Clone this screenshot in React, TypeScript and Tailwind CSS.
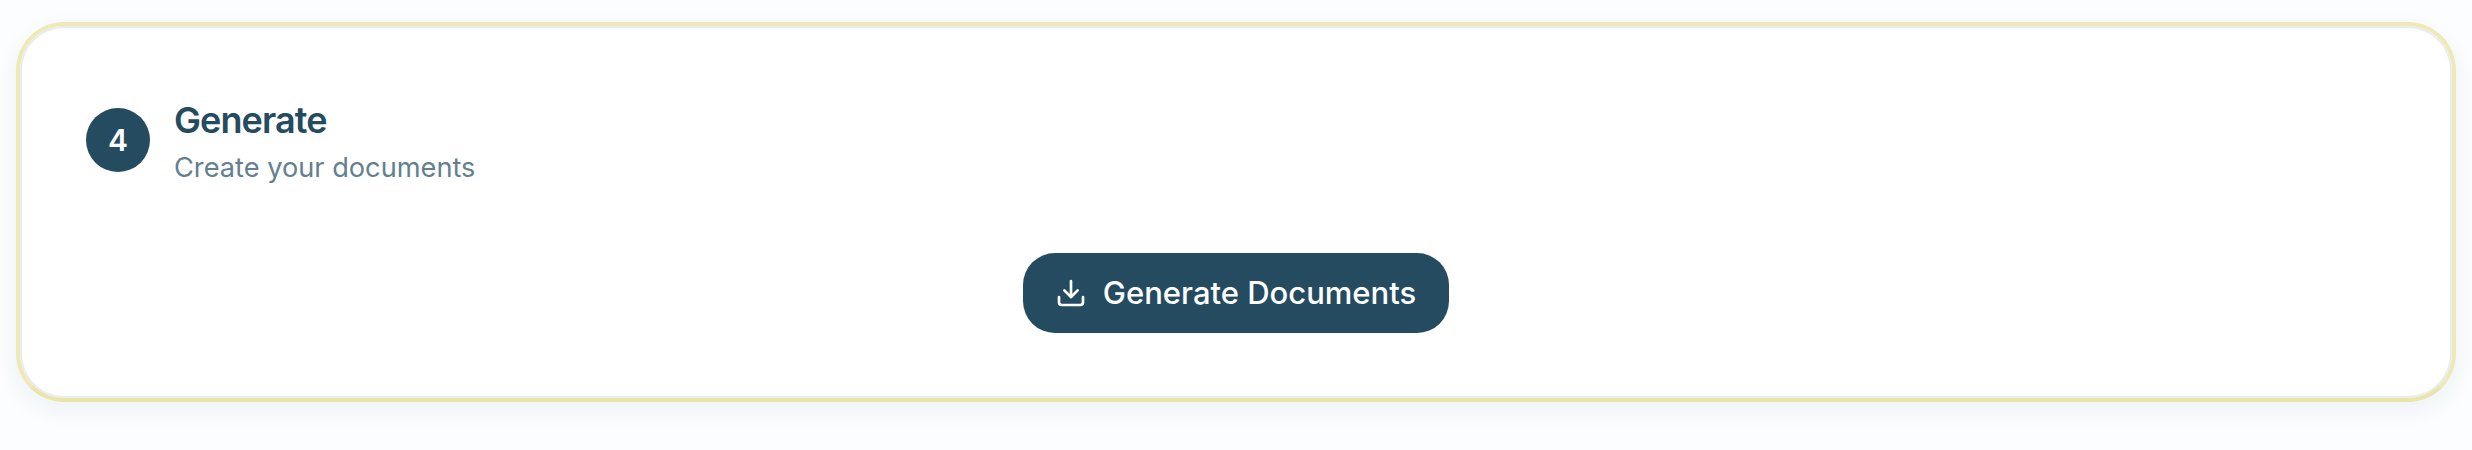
import { Download } from 'lucide-react';

function App() {
    return (
        <div className="w-full h-[450px] overflow-hidden bg-[#fbfdfe] px-4 pt-[22px] font-['Inter',sans-serif]">
            <section className="h-[380px] rounded-[48px] border-4 border-[#efe9b5] border-b-[#e9e4a8] bg-white px-[66px] pt-[74px] shadow-[inset_0_0_0_2px_#e8edf2,0_8px_24px_rgba(36,75,95,0.06)]">
                <div className="flex items-start gap-6">
                    <div className="mt-2 flex size-16 items-center justify-center rounded-full bg-[#244b5f] text-[30px] font-semibold text-white">4</div>
                    <div>
                        <h3 className="text-[36px] leading-[40px] font-semibold tracking-tight text-[#244b5f]">Generate</h3>
                        <p className="mt-[10px] text-[27.2px] leading-[36px] text-[#64808e]">Create your documents</p>
                    </div>
                </div>
                <div className="mt-[67px] flex justify-center">
                    <button className="flex h-20 items-center gap-4 rounded-[32px] bg-[#244b5f] pl-8 pr-[33px] text-[31px] font-medium text-white">
                        <Download className="size-8" />
                        Generate Documents
                    </button>
                </div>
            </section>
        </div>
    );
}
export default App;
